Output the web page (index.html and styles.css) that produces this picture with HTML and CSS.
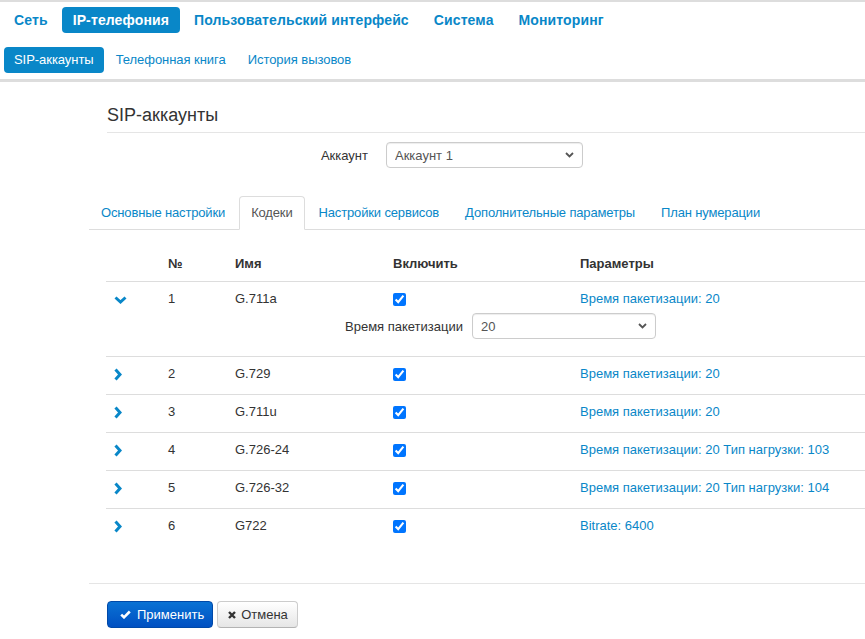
FILE: index.html
```html
<!DOCTYPE html>
<html>
  <head>
    <meta charset="utf-8" />
    <title>SIP-аккаунты</title>
    <link rel="stylesheet" href="styles.css">
  </head>

  <body>
    <div class="topbar">
      <nav class="menu main-menu">
        <a href="#">Сеть</a>
        <a href="#" class="active">IP-телефония</a>
        <a href="#">Пользовательский интерфейс</a>
        <a href="#">Система</a>
        <a href="#">Мониторинг</a>
      </nav>
      <nav class="menu sub-menu">
        <a href="#" class="active">SIP-аккаунты</a>
        <a href="#">Телефонная книга</a>
        <a href="#">История вызовов</a>
      </nav>
    </div>

    <div class="page">
      <h3 class="page-title">SIP-аккаунты</h3>

      <div class="account-row">
        <label for="account">Аккаунт</label>
        <div class="select-wrap account-select">
          <select id="account">
            <option selected>Аккаунт 1</option>
            <option>Аккаунт 2</option>
          </select>
          <svg class="caret" width="9" height="6" viewBox="0 0 9 6"><polyline points="1,1 4.5,4.5 8,1" fill="none" stroke="#555" stroke-width="1.8"/></svg>
        </div>
      </div>

      <ul class="tabs">
        <li><a href="#">Основные настройки</a></li>
        <li class="active"><a href="#">Кодеки</a></li>
        <li><a href="#">Настройки сервисов</a></li>
        <li><a href="#">Дополнительные параметры</a></li>
        <li><a href="#">План нумерации</a></li>
      </ul>

      <table class="codecs">
        <colgroup>
          <col style="width: 54px" />
          <col style="width: 67px" />
          <col style="width: 158px" />
          <col style="width: 187px" />
          <col />
        </colgroup>
        <thead>
          <tr>
            <th></th>
            <th>№</th>
            <th>Имя</th>
            <th>Включить</th>
            <th>Параметры</th>
          </tr>
        </thead>
        <tbody>
          <tr class="main open">
            <td><svg class="chev" width="13" height="8" viewBox="0 0 13 8"><polyline points="1.5,1.5 6.5,6 11.5,1.5" fill="none" stroke="#0987c8" stroke-width="3"/></svg></td>
            <td>1</td>
            <td>G.711a</td>
            <td><input type="checkbox" checked /></td>
            <td><a href="#">Время пакетизации: 20</a></td>
          </tr>
          <tr class="detail">
            <td colspan="5">
              <div class="detail-row">
                <label for="ptime">Время пакетизации</label>
                <div class="select-wrap ptime-select">
                  <select id="ptime">
                    <option>10</option>
                    <option selected>20</option>
                    <option>30</option>
                  </select>
                  <svg class="caret" width="9" height="6" viewBox="0 0 9 6"><polyline points="1,1 4.5,4.5 8,1" fill="none" stroke="#555" stroke-width="1.8"/></svg>
                </div>
              </div>
            </td>
          </tr>
          <tr class="main">
            <td><svg class="chev" width="8" height="13" viewBox="0 0 8 13"><polyline points="1.5,1.5 6,6.5 1.5,11.5" fill="none" stroke="#0987c8" stroke-width="3"/></svg></td>
            <td>2</td>
            <td>G.729</td>
            <td><input type="checkbox" checked /></td>
            <td><a href="#">Время пакетизации: 20</a></td>
          </tr>
          <tr class="main">
            <td><svg class="chev" width="8" height="13" viewBox="0 0 8 13"><polyline points="1.5,1.5 6,6.5 1.5,11.5" fill="none" stroke="#0987c8" stroke-width="3"/></svg></td>
            <td>3</td>
            <td>G.711u</td>
            <td><input type="checkbox" checked /></td>
            <td><a href="#">Время пакетизации: 20</a></td>
          </tr>
          <tr class="main">
            <td><svg class="chev" width="8" height="13" viewBox="0 0 8 13"><polyline points="1.5,1.5 6,6.5 1.5,11.5" fill="none" stroke="#0987c8" stroke-width="3"/></svg></td>
            <td>4</td>
            <td>G.726-24</td>
            <td><input type="checkbox" checked /></td>
            <td><a href="#">Время пакетизации: 20 Тип нагрузки: 103</a></td>
          </tr>
          <tr class="main">
            <td><svg class="chev" width="8" height="13" viewBox="0 0 8 13"><polyline points="1.5,1.5 6,6.5 1.5,11.5" fill="none" stroke="#0987c8" stroke-width="3"/></svg></td>
            <td>5</td>
            <td>G.726-32</td>
            <td><input type="checkbox" checked /></td>
            <td><a href="#">Время пакетизации: 20 Тип нагрузки: 104</a></td>
          </tr>
          <tr class="main">
            <td><svg class="chev" width="8" height="13" viewBox="0 0 8 13"><polyline points="1.5,1.5 6,6.5 1.5,11.5" fill="none" stroke="#0987c8" stroke-width="3"/></svg></td>
            <td>6</td>
            <td>G722</td>
            <td><input type="checkbox" checked /></td>
            <td><a href="#">Bitrate: 6400</a></td>
          </tr>
        </tbody>
      </table>

      <div class="form-actions">
        <button class="btn btn-primary">
          <svg width="11" height="9" viewBox="0 0 11 9"><polyline points="1.2,4.6 4,7.3 9.8,1.5" fill="none" stroke="#fff" stroke-width="2.6"/></svg>
          Применить
        </button>
        <button class="btn btn-default" type="button">
          <svg width="8" height="8" viewBox="0 0 8 8"><path d="M1,1 L7,7 M7,1 L1,7" stroke="#333" stroke-width="2.4"/></svg>
          Отмена
        </button>
      </div>
    </div>
  </body>
</html>
```

FILE: styles.css
```css
body {
  margin: 0;
  font-family: "Liberation Sans", Arial, sans-serif;
  font-size: 13px;
  color: #333;
  background-color: #ffffff;
  overflow-x: hidden;
}

a {
  color: #0987c8;
  text-decoration: none;
}

.topbar {
  border-top: 2px solid #dddddd;
  border-bottom: 3px solid #dddddd;
  padding: 5px 0 6px 3px;
}

.menu {
  display: flex;
  gap: 3px;
}

.menu a {
  display: block;
  height: 26px;
  line-height: 26px;
  border-radius: 4px;
}

.menu a.active {
  background-color: #0987c8;
  color: #ffffff;
}

.main-menu a {
  padding: 0 11px;
  font-size: 14px;
  font-weight: bold;
  letter-spacing: 0.12px;
}

.sub-menu {
  margin-top: 14px;
  padding-left: 1px;
  gap: 2px;
}

.sub-menu a {
  padding: 0 10px;
  letter-spacing: -0.05px;
}

.page {
  margin-left: 89px;
}

.page-title {
  margin: 23px 0 0 18px;
  padding-bottom: 7px;
  border-bottom: 1px solid #e5e5e5;
  font-size: 18px;
  font-weight: normal;
  line-height: 20px;
  color: #333;
}

.account-row {
  display: flex;
  align-items: center;
  margin-top: 9px;
}

.account-row label {
  width: 279px;
  text-align: right;
  margin-right: 18px;
}

.select-wrap {
  position: relative;
}

.select-wrap select {
  appearance: none;
  -webkit-appearance: none;
  display: block;
  width: 100%;
  height: 26px;
  padding: 0 24px 0 8px;
  border: 1px solid #cccccc;
  border-radius: 4px;
  background-color: #ffffff;
  box-shadow: inset 0 1px 1px rgba(0, 0, 0, 0.075);
  font-family: inherit;
  font-size: 13px;
  color: #555;
}

.select-wrap .caret {
  position: absolute;
  right: 9px;
  top: 10px;
  pointer-events: none;
}

.account-select {
  width: 197px;
}

.tabs {
  display: flex;
  list-style: none;
  margin: 28px 0 0 0;
  padding: 0;
  border-bottom: 1px solid #dddddd;
}

.tabs li {
  margin-right: 2px;
  margin-bottom: -1px;
}

.tabs li a {
  display: block;
  padding: 7px 11px;
  line-height: 18px;
  letter-spacing: -0.15px;
  border: 1px solid transparent;
  border-radius: 4px 4px 0 0;
}

.tabs li.active a {
  color: #555;
  border-color: #dddddd #dddddd #ffffff;
  background-color: #ffffff;
}

.codecs {
  margin: 17px 0 0 17px;
  width: calc(100% - 17px);
  border-collapse: collapse;
  table-layout: fixed;
}

.codecs th {
  padding: 8px;
  line-height: 18px;
  text-align: left;
  font-weight: bold;
  border-bottom: 1px solid #dddddd;
}

.codecs td {
  padding: 6px 8px 10px;
  line-height: 21px;
  vertical-align: top;
}

.codecs tr.main td {
  border-top: 1px solid #dddddd;
}

.codecs tr.open td {
  padding-bottom: 0;
}

.codecs tr.detail td {
  padding: 4px 8px 17px;
}

.codecs .chev {
  vertical-align: middle;
}

.codecs input[type="checkbox"] {
  width: 13px;
  height: 13px;
  margin: 0;
  vertical-align: middle;
}

.detail-row {
  display: flex;
  align-items: center;
}

.detail-row label {
  width: 349px;
  text-align: right;
  margin-right: 9px;
}

.ptime-select {
  width: 184px;
}

.form-actions {
  margin-top: 37px;
  border-top: 1px solid #e5e5e5;
  padding: 17px 0 0 18px;
  display: flex;
  gap: 4px;
}

.btn {
  display: inline-flex;
  align-items: center;
  height: 27px;
  border-radius: 4px;
  font-family: inherit;
  font-size: 13px;
  cursor: pointer;
}

.btn-primary {
  color: #ffffff;
  border: 1px solid #0049a8;
  background-image: linear-gradient(#0a72d4, #0050c2);
  padding: 0 8px 0 12px;
  gap: 6px;
}

.btn-default {
  color: #333;
  border: 1px solid #cccccc;
  border-bottom-color: #b3b3b3;
  background-image: linear-gradient(#ffffff, #e6e6e6);
  padding: 0 9px 0 10px;
  gap: 5px;
}
```
